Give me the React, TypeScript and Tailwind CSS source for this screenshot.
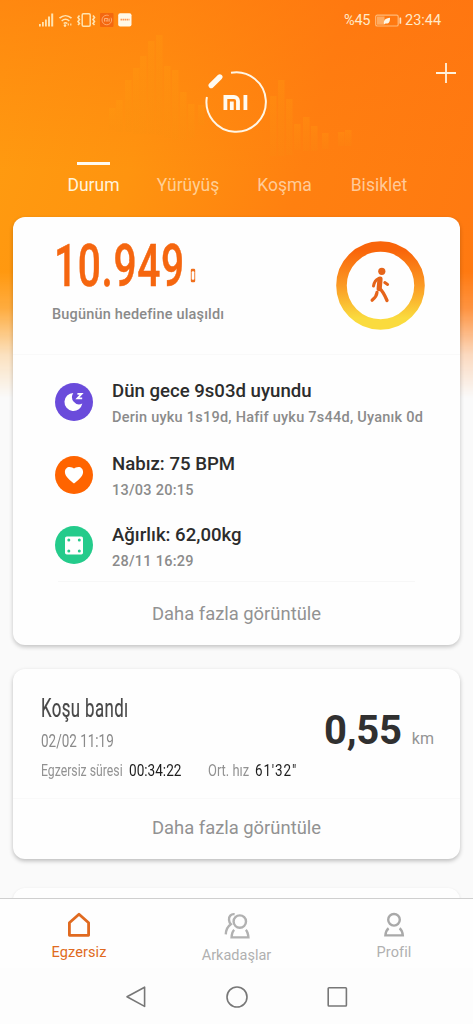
import type { ReactNode } from "react";
import clsx from "clsx";

interface Stat {
  id: string;
  title: string;
  detail: string;
  color: string;
  spacing: string;
  icon: ReactNode;
}

const TABS = [
  { label: "Durum", className: "w-[51px] text-[#fff3dc]" },
  { label: "Yürüyüş", className: "w-[62px] text-[#ffcf94]" },
  { label: "Koşma", className: "w-[55px] text-[#ffcb98]" },
  { label: "Bisiklet", className: "w-[56px] text-[#ffc998]" },
];

// Equalizer bars behind the logo: x, top, height
const BARS = [
  [109, 108, 22],
  [116, 100, 32],
  [125, 80, 52],
  [133, 68, 66],
  [140, 56, 78],
  [148, 41, 93],
  [156, 35, 100],
  [164, 66, 72],
  [172, 70, 70],
  [180, 92, 48],
  [188, 104, 34],
  [198, 105, 20],
  [270, 96, 60],
  [278, 80, 76],
  [286, 99, 56],
  [294, 124, 26],
  [303, 117, 34],
  [311, 126, 25],
  [322, 133, 16],
  [338, 132, 14],
  [345, 130, 16],
];

const SleepIcon = () => (
  <svg width="38" height="38" viewBox="0 0 38 38" fill="none">
    <path d="M18.3 10a9 9 0 1 0 9 10.6 7.2 7.2 0 0 1-9-10.6Z" fill="#fff" />
    <path d="M22.4 10.8h4.2l-4.2 4.6h4.8" stroke="#fff" strokeWidth="1.8" />
  </svg>
);

const HeartIcon = () => (
  <svg width="38" height="38" viewBox="0 0 38 38">
    <path
      d="M19 27.6c-3.2-2.8-9.1-7-9.1-11.7 0-3 2.1-5 4.6-5 2 0 3.6 1 4.5 1.6.9-.6 2.5-1.6 4.5-1.6 2.5 0 4.6 2 4.6 5 0 4.7-5.9 8.9-9.1 11.7Z"
      fill="#fff"
    />
  </svg>
);

const ScaleIcon = () => (
  <svg width="38" height="38" viewBox="0 0 38 38">
    <rect x="10" y="10.5" width="18" height="18" rx="1.8" fill="#fff" />
    <g fill="#24cb8b">
      <circle cx="13.8" cy="14" r="1.5" />
      <circle cx="24.3" cy="14" r="1.5" />
      <circle cx="13.8" cy="25" r="1.5" />
      <circle cx="24.3" cy="25" r="1.5" />
    </g>
  </svg>
);

const STATS: Stat[] = [
  {
    id: "sleep",
    title: "Dün gece 9s03d uyundu",
    detail: "Derin uyku 1s19d, Hafif uyku 7s44d, Uyanık 0d",
    color: "bg-[#6a4bdb]",
    spacing: "h-[73px]",
    icon: <SleepIcon />,
  },
  {
    id: "pulse",
    title: "Nabız: 75 BPM",
    detail: "13/03 20:15",
    color: "bg-[#ff6400]",
    spacing: "h-[70px]",
    icon: <HeartIcon />,
  },
  {
    id: "weight",
    title: "Ağırlık: 62,00kg",
    detail: "28/11 16:29",
    color: "bg-[#24cb8b]",
    spacing: "h-[56px]",
    icon: <ScaleIcon />,
  },
];

const HeaderBackdrop = () => (
  <div className="absolute inset-x-0 top-0 h-[400px] mask-[linear-gradient(to_bottom,#000_0,#000_272px,rgba(0,0,0,0.8)_308px,rgba(0,0,0,0.25)_355px,transparent_398px)] bg-[linear-gradient(105deg,#ff9c10_0%,#ff940f_30%,#ff8010_60%,#ff7811_100%)]">
    <div className="absolute inset-0 bg-[linear-gradient(to_bottom,rgba(255,112,16,0.45)_0,transparent_170px)]" />
    <svg width="473" height="180" className="absolute left-0 top-0">
      <defs>
        <linearGradient id="bars" x1="0" y1="0" x2="0" y2="1">
          <stop offset="0" stopColor="#ffa010" stopOpacity="0.25" />
          <stop offset="1" stopColor="#f59010" stopOpacity="0.14" />
        </linearGradient>
      </defs>
      {BARS.map(([x, y, h]) => (
        <rect key={x} x={x} y={y} width="6.5" height={h} fill="url(#bars)" />
      ))}
    </svg>
  </div>
);

const StatusBar = () => (
  <div className="flex h-10 items-center justify-between pl-[39px] pr-[31px] text-[#ffe9c8]">
    <svg width="94" height="16" viewBox="0 0 94 16" fill="none">
      <g fill="#ffe3b0">
        <rect x="0" y="12" width="1.8" height="2.5" />
        <rect x="3" y="10" width="1.8" height="4.5" />
        <rect x="6" y="7.5" width="1.8" height="7" />
        <rect x="9" y="4.5" width="2" height="10" />
        <rect x="12.2" y="1.5" width="2" height="13" />
      </g>
      <g stroke="#ffe3b0" strokeWidth="1.6">
        <path d="M20.5 6.2c3.6-3.3 8.4-3.3 12 0" />
        <path d="M22.7 9c2.4-2.2 5.2-2.2 7.6 0" />
        <path d="M24.7 11.5c1.2-1 2.4-1 3.6 0" />
        <path d="M29.3 13.5v-2M31.8 13.5v-2" strokeWidth="1.2" />
      </g>
      <circle cx="26" cy="13.6" r="1.3" fill="#ffe3b0" />
      <rect x="43.2" y="1.7" width="8" height="12.6" rx="1.2" stroke="#ffe3b0" strokeWidth="1.5" />
      <path
        d="M40.5 3.5l-1.5 2 1.5 2-1.5 2 1.5 2-1.5 1.5M54 3.5l1.5 2-1.5 2 1.5 2-1.5 2 1.5 1.5"
        stroke="#ffe3b0"
        strokeWidth="1.6"
      />
      <rect x="61" y="1" width="13.5" height="14" rx="1" fill="#f4680f" />
      <circle cx="67.8" cy="8" r="4.8" stroke="#ffae72" strokeWidth="0.9" strokeDasharray="24 3" />
      <path d="M65.5 9.6V6.5h3.3v3.1M67.2 7.7v1.9M70.2 6.5v3.1" stroke="#ffc291" strokeWidth="0.8" />
      <rect x="79.2" y="1.2" width="13.3" height="13.3" rx="2" fill="#fff8e8" />
      <path d="M81.5 7.7h9" stroke="#ff9a54" strokeWidth="1.8" strokeDasharray="1.6 0.5" />
    </svg>
    <div className="flex items-center pt-px text-[14.5px]">
      <span className="w-[28px] tracking-[-0.2px]">%45</span>
      <svg width="27" height="14" viewBox="0 0 27 14" fill="none" className="ml-[3px] mr-[3px]">
        <rect x="0.7" y="1.2" width="22.5" height="10.8" rx="1.6" stroke="#ffb978" strokeWidth="1.2" />
        <rect x="2" y="2.5" width="7.5" height="8.2" fill="#ffab60" />
        <rect x="24.5" y="3.5" width="1.7" height="6.3" rx="0.6" fill="#ffe3c0" />
        <path d="M9 10.3c-.8-3.6 1.2-6.1 6-6.5.2 4-1.3 6.3-4.4 5.7Z" fill="#fff6e4" />
      </svg>
      <span className="w-[37px] whitespace-nowrap">23:44</span>
    </div>
  </div>
);

const Logo = () => (
  <svg width="66" height="66" viewBox="0 0 66 66" fill="none">
    <path d="M28 3.8A29.7 29.7 0 1 1 3.9 28" stroke="#fff6e6" strokeWidth="2" />
    <path d="M8.2 16.5L16.8 8" stroke="#fffaf0" strokeWidth="5.4" strokeLinecap="round" />
    <path d="M22.4 41V28h8.6a4 4 0 0 1 4 4v9" stroke="#fffaf0" strokeWidth="3.8" />
    <path d="M28.8 32.6V41M42.4 26.1V41" stroke="#fffaf0" strokeWidth="3.8" />
  </svg>
);

const Header = () => (
  <header className="flex h-[177px] flex-col">
    <div className="grid h-[95px] grid-cols-3 justify-items-center">
      <div className="col-start-2 pt-[29px]">
        <Logo />
      </div>
      <svg width="20" height="20" viewBox="0 0 20 20" className="mt-[23px] mr-[17px] justify-self-end">
        <path d="M10 0v20M0 10h20" stroke="#fff2de" strokeWidth="1.8" />
      </svg>
    </div>
    <nav className="flex gap-[38px] pt-[27px] pl-[68px]">
      {TABS.map((tab, i) => (
        <div key={tab.label} className={clsx("flex flex-col items-center", tab.className, i === 3 && "ml-px")}>
          <div className={clsx("h-[3px] w-[33px]", i === 0 && "bg-[#fffaf0]")} />
          <span className="mt-[8px] text-[17.5px] leading-6">{tab.label}</span>
        </div>
      ))}
    </nav>
  </header>
);

const ShowMore = () => (
  <div className="text-center text-[18.4px] leading-6 text-[#929292]">Daha fazla görüntüle</div>
);

const GoalRing = () => (
  <svg width="90" height="90" viewBox="0 0 90 90" fill="none">
    <defs>
      <linearGradient id="ring" x1="0" y1="0" x2="0" y2="1">
        <stop offset="0.05" stopColor="#f9650a" />
        <stop offset="0.5" stopColor="#fb9a24" />
        <stop offset="0.92" stopColor="#fadb3e" />
      </linearGradient>
    </defs>
    <circle cx="44.5" cy="45.5" r="39" stroke="url(#ring)" strokeWidth="10.6" />
    <circle cx="45.8" cy="31.3" r="3.6" fill="#e5641a" />
    <g stroke="#e5641a" strokeLinecap="round" strokeLinejoin="round">
      <path d="M44 39.2l-.8 9.4" strokeWidth="5.2" />
      <path d="M42.5 38.6c-3.4 1.3-4.3 3.5-5 7.4" strokeWidth="3" />
      <path d="M43.6 48.5c3.5 2.8 5.2 7 7.4 12" strokeWidth="3.4" />
      <path d="M41 52.4c-.4 4.3-2 5.4-4.9 7.8" strokeWidth="3.2" />
      <path d="M48.8 42.6l2.8 1.9" strokeWidth="3" />
    </g>
  </svg>
);

const DailyCard = () => (
  <section className="h-[428px] rounded-xl bg-[#fefefe] shadow-[0_2px_4px_rgba(0,0,0,0.22)]">
    <div className="flex h-[138px] justify-between border-b border-[#f9f9f9] pl-[39px] pr-[34px] pt-[19px]">
      <div>
        <div className="flex h-[60px]">
          <div className="w-[143px] pl-[2px]">
            <span className="inline-block origin-left scale-x-[0.69] text-[59px] leading-[60px] font-medium tracking-[0.9px] text-[#f5660f] [-webkit-text-stroke:0.5px_#f5660f]">
              10.949
            </span>
          </div>
          <svg width="6" height="15" viewBox="0 0 6 15" fill="none" className="mt-[32px] -ml-[5px]">
            <rect x="0.8" y="0.8" width="4.4" height="13.4" rx="1.2" fill="#f0701d" />
            <rect x="1.7" y="3.2" width="2.6" height="8.6" rx="1" fill="#fff" />
          </svg>
        </div>
        <p className="mt-[9px] text-[14.5px] leading-5 font-medium tracking-[0.18px] text-[#8a8a8a]">
          Bugünün hedefine ulaşıldı
        </p>
      </div>
      <div className="pt-[4px]">
        <GoalRing />
      </div>
    </div>
    <ul className="pl-[42px] pt-[24px]">
      {STATS.map((stat) => (
        <li key={stat.id} className={clsx("flex", stat.spacing)}>
          <div className={clsx("mt-[4px] size-[38px] shrink-0 rounded-full", stat.color)}>{stat.icon}</div>
          <div className={clsx("ml-[19px] whitespace-nowrap", stat.id === "weight" && "pt-px")}>
            <h3 className="text-[18.6px] leading-6 font-medium text-[#2c2c2c]">{stat.title}</h3>
            <p className="mt-[5px] text-[14.5px] leading-5 font-medium tracking-[0.24px] text-[#8b8b8b]">
              {stat.detail}
            </p>
          </div>
        </li>
      ))}
    </ul>
    <div className="mx-[45px] mt-[3px] mb-[20px] h-px bg-[#f7f7f7]" />
    <ShowMore />
  </section>
);

const TreadmillCard = () => (
  <section className="mt-6 h-[190px] rounded-xl bg-[#fefefe] shadow-[0_2px_4px_rgba(0,0,0,0.25)]">
    <div className="flex h-[130px] justify-between border-b border-[#f9f9f9] pl-[28px] pr-[26px] whitespace-nowrap">
      <div className="w-[260px] pt-[23px]">
        <h2 className="h-8 w-[90px]">
          <span className="inline-block origin-left scale-x-[0.66] text-[25.5px] leading-8 tracking-[0.6px] text-[#484848] [-webkit-text-stroke:0.2px_#484848]">
            Koşu bandı
          </span>
        </h2>
        <p className="mt-[5px] h-6 w-[74px]">
          <span className="inline-block origin-left scale-x-[0.77] text-[17.5px] leading-6 text-[#8a8a8a]">
            02/02 11:19
          </span>
        </p>
        <div className="mt-[5px] flex h-6 text-[17px] leading-6">
          <div className="w-[88px]">
            <span className="inline-block origin-left scale-x-[0.72] text-[#929292]">Egzersiz süresi</span>
          </div>
          <div className="w-[79px]">
            <span className="inline-block origin-left scale-x-[0.8] text-[#1d1d1d]">00:34:22</span>
          </div>
          <div className="w-[47px]">
            <span className="inline-block origin-left scale-x-[0.76] text-[#929292]">Ort. hız</span>
          </div>
          <div className="w-[43px]">
            <span className="inline-block origin-left scale-x-[0.79] tracking-[1.1px] text-[#1d1d1d]">61'32"</span>
          </div>
        </div>
      </div>
      <div className="flex items-baseline pt-[38px] text-[#303030]">
        <span className="text-[40px] leading-[48px] font-bold tracking-[-0.2px]">0,55</span>
        <span className="ml-[10px] text-[16px] text-[#949494]">km</span>
      </div>
    </div>
    <div className="pt-[17px]">
      <ShowMore />
    </div>
  </section>
);

const BottomNav = () => (
  <nav className="flex h-[70px] justify-between border-t border-[#cfcfcf] bg-[#fefefe] pl-[39px] pr-[39px] text-[14.5px] leading-5 text-[#b0b0b0]">
    <div className="flex w-20 flex-col items-center pt-[13px] text-[#e06a20]">
      <svg width="24" height="26" viewBox="0 0 24 26" fill="none">
        <path
          d="M2.4 10.8L12 2.2l9.6 8.6v12.5H2.4Z"
          stroke="#e06a20"
          strokeWidth="2.8"
          strokeLinejoin="round"
        />
      </svg>
      <span className="mt-[5px] tracking-[0.1px]">Egzersiz</span>
    </div>
    <div className="flex w-20 flex-col items-center pt-[13px]">
      <svg width="28" height="28" viewBox="0 0 28 28" fill="none" stroke="#b1b1b1" strokeWidth="2.4">
        <circle cx="16.8" cy="9.6" r="6.2" />
        <path d="M11.2 17.8c-1.6 1.5-2.4 3.8-2.6 7.6h16.8c-.3-3.8-1.1-6.1-2.6-7.6" />
        <path d="M11.6 2.2c-3.6-.5-6 2.4-5.6 5.7.2 2 .8 3.3 1.8 4.3-3.4 2.4-4.9 5.5-5 10.2" />
      </svg>
      <span className="mt-[6px]">Arkadaşlar</span>
    </div>
    <div className="flex w-20 flex-col items-center pt-[13px]">
      <svg width="24" height="26" viewBox="0 0 24 26" fill="none" stroke="#a9a9a9" strokeWidth="2.4">
        <circle cx="12" cy="7.8" r="5.8" />
        <path d="M6.6 16.2c-1.8 1.4-2.9 3.6-3.2 7.2h17.4c-.3-3.6-1.4-5.8-3.2-7.2" />
      </svg>
      <span className="mt-[5px] tracking-[0.1px]">Profil</span>
    </div>
  </nav>
);

const SystemBar = () => (
  <div className="flex h-14 items-center justify-center gap-[79px] bg-[#fdfdfd] pt-[2px]">
    <svg width="22" height="24" viewBox="0 0 22 24" fill="none">
      <path d="M19.6 2.2v19.2L2 11.8Z" stroke="#777" strokeWidth="1.6" strokeLinejoin="round" />
    </svg>
    <svg width="22" height="24" viewBox="0 0 22 24" fill="none">
      <circle cx="11" cy="12" r="10" stroke="#777" strokeWidth="1.6" />
    </svg>
    <svg width="22" height="24" viewBox="0 0 22 24" fill="none">
      <rect x="1.2" y="2.8" width="18.2" height="18.2" rx="0.8" stroke="#777" strokeWidth="1.6" />
    </svg>
  </div>
);

const App = () => {
  return (
    <div className="relative flex h-[1024px] w-[473px] flex-col overflow-hidden bg-[#fafafa] font-[Roboto,sans-serif]">
      <HeaderBackdrop />
      <div className="relative h-[898px] shrink-0 overflow-hidden">
        <StatusBar />
        <Header />
        <main className="pl-[13px] pr-[13px]">
          <DailyCard />
          <TreadmillCard />
          <section className="mt-[29px] h-16 rounded-xl bg-[#fefefe] shadow-[0_1px_3px_rgba(0,0,0,0.12)]" />
        </main>
      </div>
      <BottomNav />
      <SystemBar />
    </div>
  );
};

export default App;
